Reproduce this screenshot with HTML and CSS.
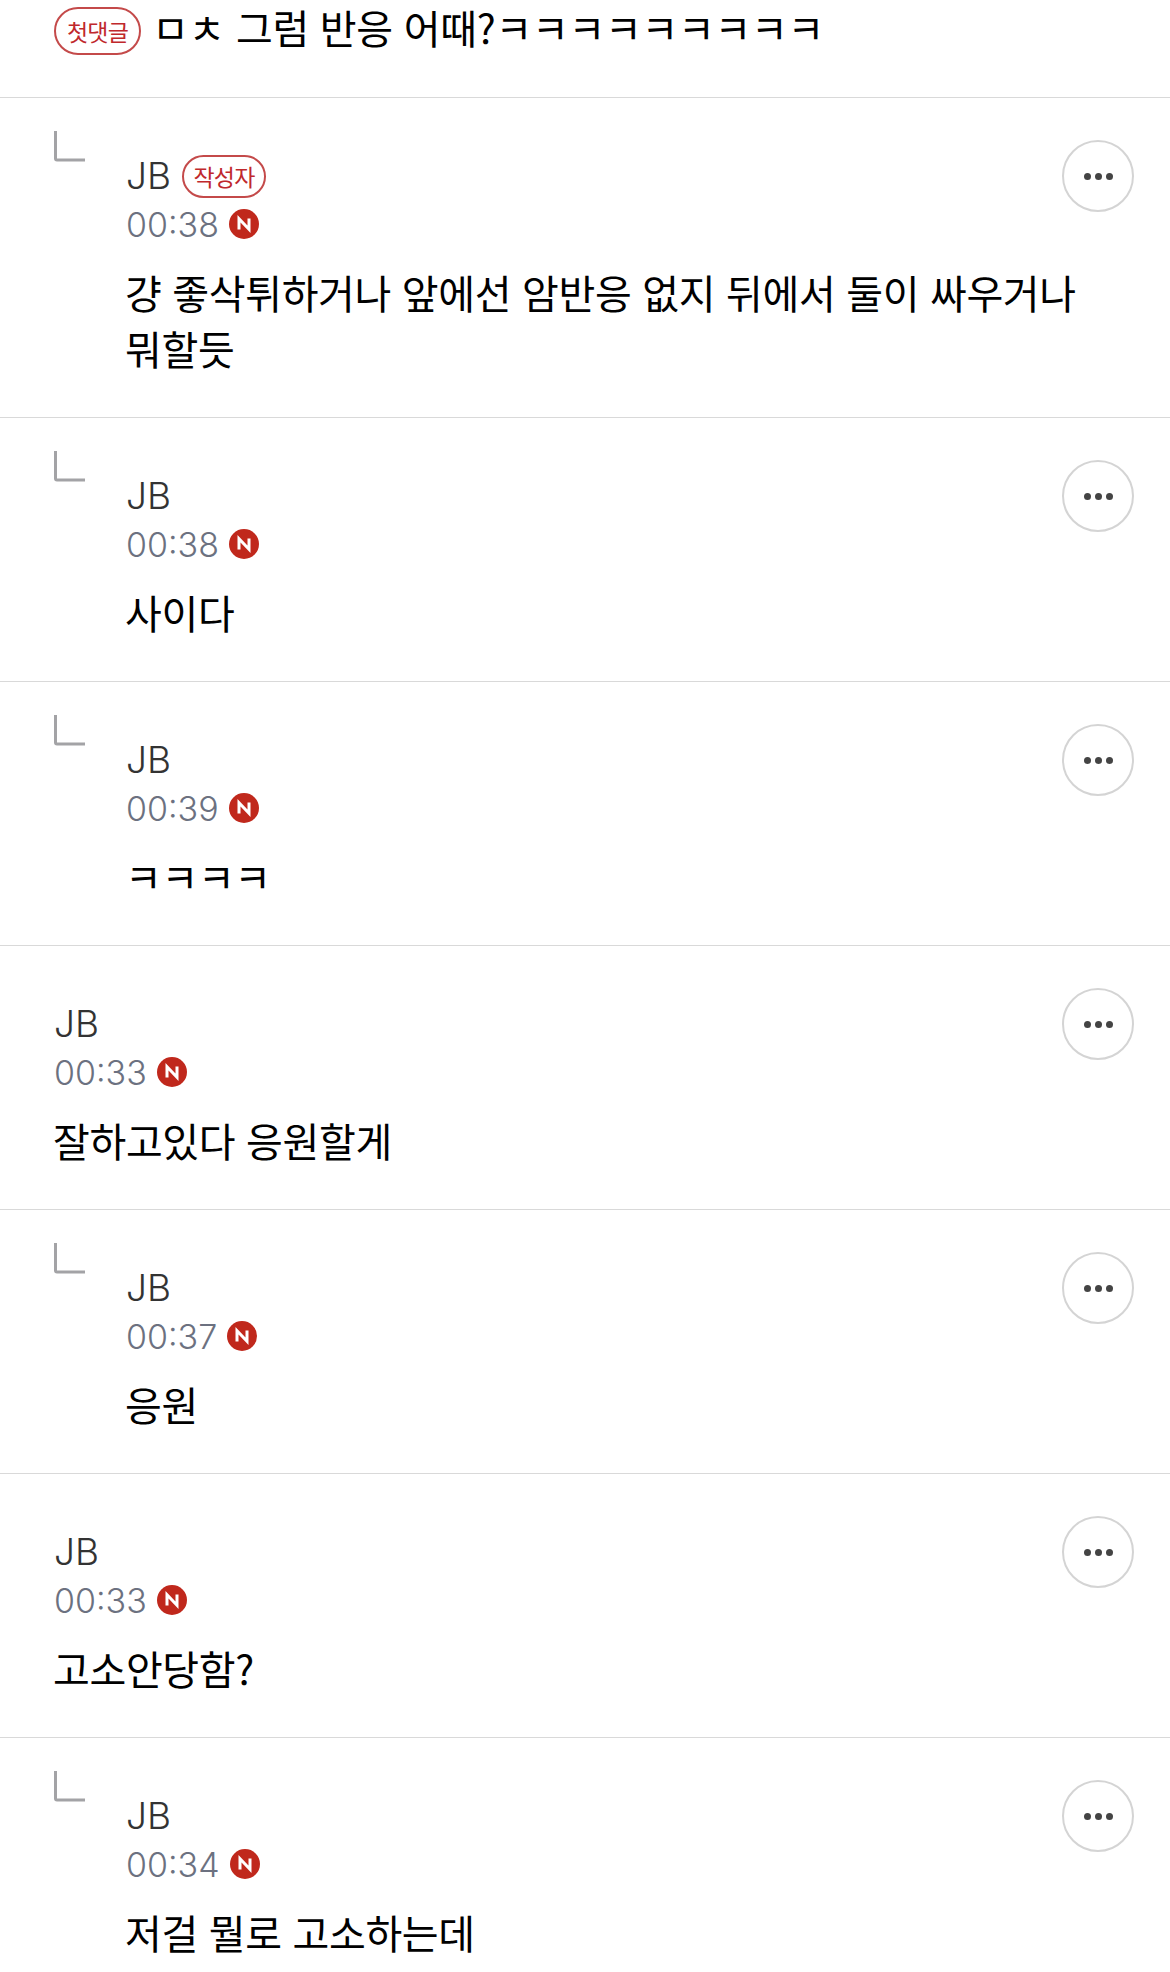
FILE: index.html
```html
<!DOCTYPE html>
<html lang="ko">
<head>
<meta charset="utf-8">
<title>댓글</title>
<link rel="stylesheet" href="styles.css">
</head>
<body>
<svg class="defs" width="0" height="0" aria-hidden="true">
  <symbol id="n" viewBox="0 0 30 30"><circle cx="15" cy="15" r="15" fill="#c0281c"/><path d="M10 20.5V9.8L20 20.2V9.5" fill="none" stroke="#fff" stroke-width="3"/></symbol>
  <symbol id="reply" viewBox="0 0 32 32"><path d="M1.5 1V28.5a1.5 1.5 0 0 0 1.5 1.5H31" fill="none" stroke="#a3a3a6" stroke-width="3"/></symbol>
</svg>
<main class="list">
  <div class="first">
    <span class="badge first-badge">첫댓글</span>
    <span class="first-text">ㅁㅊ 그럼 반응 어때?ㅋㅋㅋㅋㅋㅋㅋㅋㅋ</span>
  </div>

  <article class="row row-reply">
    <svg class="reply-mark"><use href="#reply"/></svg>
    <div class="body">
      <div class="name">JB <span class="badge author-badge">작성자</span></div>
      <div class="meta">00:38 <svg class="new"><use href="#n"/></svg></div>
      <p class="text">걍 좋삭튀하거나 앞에선 암반응 없지 뒤에서 둘이 싸우거나<br>뭐할듯</p>
    </div>
    <button class="more"><i></i><i></i><i></i></button>
  </article>

  <article class="row row-reply">
    <svg class="reply-mark"><use href="#reply"/></svg>
    <div class="body">
      <div class="name">JB</div>
      <div class="meta">00:38 <svg class="new"><use href="#n"/></svg></div>
      <p class="text">사이다</p>
    </div>
    <button class="more"><i></i><i></i><i></i></button>
  </article>

  <article class="row row-reply">
    <svg class="reply-mark"><use href="#reply"/></svg>
    <div class="body">
      <div class="name">JB</div>
      <div class="meta">00:39 <svg class="new"><use href="#n"/></svg></div>
      <p class="text">ㅋㅋㅋㅋ</p>
    </div>
    <button class="more"><i></i><i></i><i></i></button>
  </article>

  <article class="row">
    <div class="body">
      <div class="name">JB</div>
      <div class="meta">00:33 <svg class="new"><use href="#n"/></svg></div>
      <p class="text">잘하고있다 응원할게</p>
    </div>
    <button class="more"><i></i><i></i><i></i></button>
  </article>

  <article class="row row-reply">
    <svg class="reply-mark"><use href="#reply"/></svg>
    <div class="body">
      <div class="name">JB</div>
      <div class="meta">00:37 <svg class="new"><use href="#n"/></svg></div>
      <p class="text">응원</p>
    </div>
    <button class="more"><i></i><i></i><i></i></button>
  </article>

  <article class="row">
    <div class="body">
      <div class="name">JB</div>
      <div class="meta">00:33 <svg class="new"><use href="#n"/></svg></div>
      <p class="text">고소안당함?</p>
    </div>
    <button class="more"><i></i><i></i><i></i></button>
  </article>

  <article class="row row-reply">
    <svg class="reply-mark"><use href="#reply"/></svg>
    <div class="body">
      <div class="name">JB</div>
      <div class="meta">00:34 <svg class="new"><use href="#n"/></svg></div>
      <p class="text">저걸 뭘로 고소하는데</p>
    </div>
    <button class="more"><i></i><i></i><i></i></button>
  </article>
</main>
</body>
</html>
```

FILE: styles.css
```css
html, body {
  margin: 0;
  background: #fff;
}
body {
  font-family: "Noto Sans CJK KR", "Liberation Sans", sans-serif;
  color: #000;
  overflow: hidden;
  height: 1972px;
}
.defs { position: absolute; }
.list { display: flex; flex-direction: column; }
.first {
  height: 97px;
  box-sizing: border-box;
  padding: 7px 0 0 54px;
  display: flex;
  align-items: flex-start;
  gap: 11px;
}
.badge {
  display: inline-flex;
  align-items: center;
  justify-content: center;
  box-sizing: border-box;
  border: 2px solid #c44a4a;
  border-radius: 24px;
  color: #c0282c;
  font-size: 23px;
  letter-spacing: -0.8px;
}
.first-badge { width: 87px; height: 48px; }
.first-text {
  font-size: 40px;
  line-height: 48px;
  letter-spacing: -0.3px;
  margin-top: -4px;
}
.row {
  position: relative;
  display: flex;
  justify-content: space-between;
  border-top: 1px solid #d9d9d9;
  padding: 54px 36px 41px 54px;
}
.row-reply { padding-left: 126px; }
.reply-mark {
  position: absolute;
  left: 54px;
  top: 32px;
  width: 32px;
  height: 32px;
}
.body { flex: 1; min-width: 0; }
.name {
  display: flex;
  align-items: center;
  gap: 11px;
  height: 48px;
  font-family: "Inter", "Noto Sans CJK KR", sans-serif;
  font-size: 37px;
  font-weight: 300;
  line-height: 48px;
  color: #333;
}
.author-badge {
  width: 84px;
  height: 43px;
  font-family: "Noto Sans CJK KR", sans-serif;
  font-weight: 400;
}
.meta {
  display: flex;
  align-items: center;
  gap: 10px;
  height: 48px;
  font-family: "Inter", "Noto Sans CJK KR", sans-serif;
  font-size: 34px;
  font-weight: 300;
  color: #6c7180;
}
.new { width: 30px; height: 30px; }
.text {
  margin: 16px 0 0 -1px;
  font-size: 40px;
  line-height: 56px;
  letter-spacing: -0.35px;
  white-space: nowrap;
}
.more {
  flex: none;
  display: flex;
  align-items: center;
  justify-content: center;
  gap: 4px;
  width: 72px;
  height: 72px;
  margin-top: -12px;
  padding: 0;
  border: 2px solid #d4d4d4;
  border-radius: 50%;
  background: #fff;
}
.more i {
  width: 7px;
  height: 7px;
  border-radius: 50%;
  background: #444;
}
```
